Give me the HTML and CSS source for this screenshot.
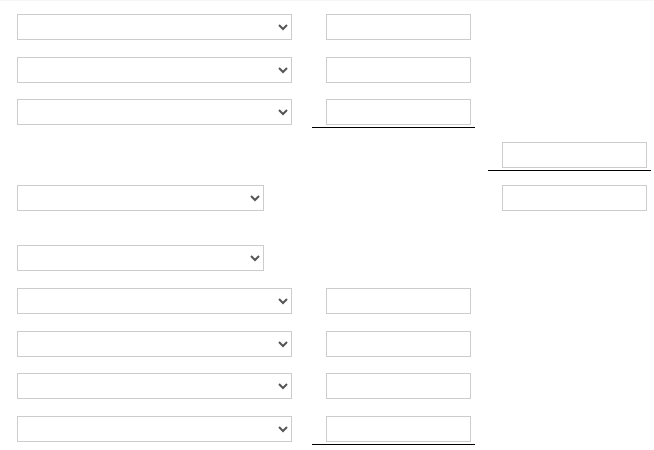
FILE: index.html
```html
<!DOCTYPE html>
<html lang="en">
<head>
<meta charset="utf-8">
<title>Form</title>
<link rel="stylesheet" href="styles.css">
</head>
<body>
<div class="sheet">
  <div class="cell c1"><select class="sel wide"><option></option></select></div>
  <div class="cell c2"><input class="amt" type="text"></div>
  <div class="cell c3"></div>

  <div class="cell c1"><select class="sel wide"><option></option></select></div>
  <div class="cell c2"><input class="amt" type="text"></div>
  <div class="cell c3"></div>

  <div class="cell c1"><select class="sel wide"><option></option></select></div>
  <div class="cell c2 total"><input class="amt" type="text"></div>
  <div class="cell c3"></div>

  <div class="cell c1"></div>
  <div class="cell c2"></div>
  <div class="cell c3 total"><input class="amt" type="text"></div>

  <div class="cell c1"><select class="sel short"><option></option></select></div>
  <div class="cell c2"></div>
  <div class="cell c3"><input class="amt" type="text"></div>

  <div class="spacer"></div>

  <div class="cell c1"><select class="sel short"><option></option></select></div>
  <div class="cell c2"></div>
  <div class="cell c3"></div>

  <div class="cell c1"><select class="sel wide"><option></option></select></div>
  <div class="cell c2"><input class="amt" type="text"></div>
  <div class="cell c3"></div>

  <div class="cell c1"><select class="sel wide"><option></option></select></div>
  <div class="cell c2"><input class="amt" type="text"></div>
  <div class="cell c3"></div>

  <div class="cell c1"><select class="sel wide"><option></option></select></div>
  <div class="cell c2"><input class="amt" type="text"></div>
  <div class="cell c3"></div>

  <div class="cell c1"><select class="sel wide"><option></option></select></div>
  <div class="cell c2 total"><input class="amt" type="text"></div>
  <div class="cell c3"></div>
</div>
</body>
</html>
```
FILE: styles.css
```css
html, body {
  margin: 0;
  padding: 0;
  background: #ffffff;
}
body {
  border-top: 1px solid #f6f6f6;
  font-family: "Liberation Sans", Arial, sans-serif;
}
.sheet {
  display: grid;
  grid-template-columns: 295px 163px 176px;
  grid-template-rows: repeat(5, 42.67px) 18px repeat(5, 42.67px);
  padding-left: 17px;
  margin-top: -1px;
}
.sheet > .c3 {
  margin-left: 13px;
}
.cell {
  box-sizing: border-box;
  padding-top: 14px;
  display: flex;
  align-items: flex-start;
}
.c2, .c3 {
  padding-left: 14px;
}
.total {
  border-bottom: 1px solid #000;
}
.spacer {
  grid-column: 1 / -1;
}
.sel {
  box-sizing: border-box;
  height: 26px;
  border: 1px solid #cccccc;
  border-radius: 0;
  background: #ffffff;
  color: #555555;
  font-family: "Liberation Sans", Arial, sans-serif;
  font-size: 13px;
  margin: 0;
}
.wide { width: 275px; }
.short { width: 247px; }
.amt {
  box-sizing: border-box;
  width: 145px;
  height: 26px;
  border: 1px solid #cccccc;
  border-radius: 0;
  padding: 0 4px;
  margin: 0;
  background: #fff;
  font-family: "Liberation Sans", Arial, sans-serif;
  font-size: 13px;
}
```
